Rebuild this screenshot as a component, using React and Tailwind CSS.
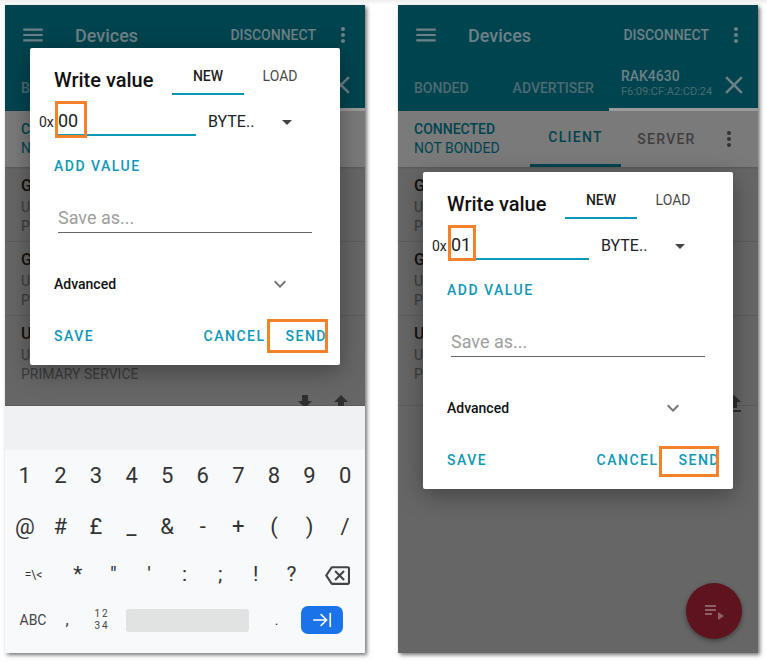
import {
  MdMenu,
  MdMoreVert,
  MdClose,
  MdArrowDropDown,
  MdExpandMore,
  MdFileDownload,
  MdFileUpload,
  MdPlaylistPlay,
  MdOutlineBackspace,
} from "react-icons/md";
import { ArrowRightToLine } from "lucide-react";

const services = [
  { name: "Generic Access", uuid: "UUID: 0x1800", h: "h-[75px]", pt: "pt-[8px]" },
  { name: "Generic Attribute", uuid: "UUID: 0x1801", h: "h-[74px]", pt: "pt-[7px]" },
  { name: "Unknown Service", uuid: "UUID: 6E400001", h: "h-[90px]", pt: "pt-[7px]" },
];

function DeviceScreen() {
  return (
    <div className="h-full flex flex-col bg-[#666666]">
      <div className="h-[106px] bg-[#00444f] flex flex-col shrink-0">
        <div className="h-[60px] flex items-center pl-[16px] text-[#6d8186]">
          <MdMenu className="w-[26px] h-[26px] -ml-[1px]" />
          <span className="ml-[29px] text-[18px] font-medium">Devices</span>
          <span className="ml-auto text-[14px] font-medium">DISCONNECT</span>
          <MdMoreVert className="w-[24px] h-[24px] ml-[15px] mr-[10px]" />
        </div>
        <div className="flex-1 flex items-center pl-[16px] text-[14px] font-medium text-[#4d6b72]">
          <span>BONDED</span>
          <span className="ml-[44px]">ADVERTISER</span>
          <div className="relative ml-[15px] w-[151px] h-full border-b-[3px] border-[#9a9a9a] pl-[12px] pt-[2px]">
            <div className="text-[14px] leading-[18px] text-[#6d8186]">RAK4630</div>
            <div className="text-[11px] leading-[13px] font-normal text-[#4d6b72]">F6:09:CF:A2:CD:24</div>
            <MdClose className="absolute right-[9px] top-[5px] w-[30px] h-[30px] text-[#6d8186]" />
          </div>
        </div>
      </div>
      <div className="h-[56px] bg-[#7a7a7a] flex items-stretch pl-[16px] shrink-0 shadow-[0_1px_2px_rgba(0,0,0,0.15)]">
        <div className="w-[116px] pt-[9px] text-[14px] leading-[19px] text-[#00444f]">
          <div className="font-medium">CONNECTED</div>
          <div>NOT BONDED</div>
        </div>
        <div className="w-[91px] h-full flex items-center justify-center border-b-[3px] border-[#00444f] text-[14px] font-medium tracking-[1.25px] text-[#00444f]">
          CLIENT
        </div>
        <div className="w-[91px] flex items-center justify-center text-[14px] font-medium tracking-[1.25px] text-[#3f3f3f]">
          SERVER
        </div>
        <div className="flex items-center ml-[-3px]">
          <MdMoreVert className="w-[24px] h-[24px] ml-[8px] text-[#333333]" />
        </div>
      </div>
      {services.map((s) => (
        <div key={s.name} className={`${s.h} ${s.pt} px-[16px] border-b border-[#5c5c5c] shrink-0`}>
          <div className="text-[16px] leading-[21px] font-medium text-[#111111]">{s.name}</div>
          <div className="text-[14px] leading-[20px] text-[#3c3c3c] mt-[1px]">{s.uuid}</div>
          <div className="text-[14px] leading-[19px] text-[#3c3c3c]">PRIMARY SERVICE</div>
        </div>
      ))}
      <div className="relative h-[48px] pl-[32px] shrink-0">
        <div className="absolute left-[32px] -top-[1px] text-[16px] leading-[21px] font-medium text-[#111111] translate-y-[7px]">
          Unknown Characteristic
        </div>
        <MdFileDownload className="absolute left-[288px] -top-[14px] w-[24px] h-[24px] text-[#2f2f2f]" />
        <MdFileUpload className="absolute left-[324px] -top-[14px] w-[24px] h-[24px] text-[#2f2f2f]" />
      </div>
    </div>
  );
}

function WriteDialog({ value, valueBox, sendBox, className }) {
  return (
    <div className={`absolute w-[310px] h-[317px] rounded-[2px] bg-white shadow-[0_6px_24px_rgba(0,0,0,0.35)] ${className}`}>
      <div className="flex h-[47px] pl-[24px]">
        <div className="w-[118px] pt-[19px] text-[20px] leading-[26px] font-medium text-[#111111]">Write value</div>
        <div className="w-[72px] h-[47px] pt-[20px] text-center text-[14px] leading-[16px] font-medium text-[#1f1f1f] border-b-[2px] border-[#0e98b8]">NEW</div>
        <div className="w-[72px] pt-[20px] text-center text-[14px] leading-[16px] text-[#4a4a4a]">LOAD</div>
      </div>
      <div className="flex mt-[13px] h-[28px] items-center pl-[9px]">
        <span className="w-[19px] text-[14px] text-[#222222]">0x</span>
        <div className="w-[138px] h-[28px] text-[18px] leading-[25px] text-[#222222] border-b-[2px] border-[#0e98b8]">{value}</div>
        <span className="ml-[12px] w-[70px] text-[16px] text-[#222222]">BYTE..</span>
        <MdArrowDropDown className="w-[24px] h-[24px] -ml-[3px] text-[#444444]" />
      </div>
      <div className="mt-[22px] pl-[24px] text-[14px] leading-[16px] font-medium tracking-[1.5px] text-[#0e98b8]">ADD VALUE</div>
      <div className="ml-[28px] mt-[32px] w-[254px] h-[27px] text-[18px] leading-[24px] text-[#9e9e9e] border-b border-[#666666]">Save as...</div>
      <div className="flex items-center mt-[41px] pl-[24px] h-[20px]">
        <span className="text-[14px] font-medium text-[#111111]">Advanced</span>
        <MdExpandMore className="w-[24px] h-[24px] ml-[152px] text-[#777777]" />
      </div>
      <div className="flex mt-[34px] pl-[24px] text-[14px] leading-[16px] font-medium tracking-[1.5px] text-[#0e98b8]">
        <span>SAVE</span>
        <span className="ml-auto">CANCEL</span>
        <span className="ml-[20px] mr-[13px]">SEND</span>
      </div>
      <div className={`absolute border-[3px] border-[#f5812a] ${valueBox}`} />
      <div className={`absolute border-[3px] border-[#f5812a] ${sendBox}`} />
    </div>
  );
}

const row1 = ["1", "2", "3", "4", "5", "6", "7", "8", "9", "0"];
const row2 = ["@", "#", "£", "_", "&", "-", "+", "(", ")", "/"];
const row3 = ["*", '"', "'", ":", ";", "!", "?"];

function Keyboard() {
  return (
    <div className="absolute left-0 right-0 bottom-0 h-[247px] bg-[#f8f9fb]">
      <div className="h-[44px] bg-[#f0f1f3]" />
      <div className="flex flex-col px-[2px] text-[#333333]">
        <div className="flex h-[51px] items-center">
          {row1.map((k) => (
            <span key={k} className="flex-1 text-center text-[22px]">{k}</span>
          ))}
        </div>
        <div className="flex h-[50px] items-center">
          {row2.map((k) => (
            <span key={k} className="flex-1 text-center text-[22px]">{k}</span>
          ))}
        </div>
        <div className="flex h-[48px] items-center">
          <span className="w-[53px] text-center text-[12px]">=\&lt;</span>
          {row3.map((k) => (
            <span key={k} className="w-[35.6px] text-center text-[21px]">{k}</span>
          ))}
          <MdOutlineBackspace className="w-[25px] h-[25px] ml-[16px] text-[#444444]" />
        </div>
        <div className="flex h-[42px] items-center">
          <span className="w-[52px] text-center text-[14px] text-[#444444]">ABC</span>
          <span className="w-[16px] text-center text-[16px]">,</span>
          <span className="w-[54px] text-center text-[10px] leading-[12px] tracking-[2px] text-[#444444]">
            12<br />34
          </span>
          <div className="w-[123px] h-[23px] ml-[-3px] rounded-[3px] bg-[#e1e2e2]" />
          <span className="w-[55px] text-center text-[14px]">.</span>
          <div className="w-[42px] h-[28px] ml-[-3px] rounded-[7px] bg-[#1a73e8] flex items-center justify-center">
            <ArrowRightToLine className="w-[24px] h-[22px] text-white" strokeWidth={1.75} />
          </div>
        </div>
      </div>
    </div>
  );
}

function Phone({ children }) {
  return (
    <div className="relative w-[360px] h-[648px] overflow-hidden shadow-[2px_2px_4px_rgba(0,0,0,0.55)]">
      <DeviceScreen />
      {children}
    </div>
  );
}

export default function App() {
  return (
    <div className="w-[767px] h-[662px] bg-white overflow-hidden" style={{ fontFamily: "Roboto, sans-serif" }}>
      <div className="h-[5px] bg-gradient-to-b from-[#eeeeee] to-white" />
      <div className="flex gap-[33px] pl-[5px]">
        <Phone>
          <Keyboard />
          <WriteDialog
            value="00"
            className="left-[25px] top-[43px]"
            valueBox="left-[25px] top-[53px] w-[32px] h-[37px]"
            sendBox="left-[237px] top-[271px] w-[61px] h-[34px]"
          />
        </Phone>
        <Phone>
          <WriteDialog
            value="01"
            className="left-[25px] top-[167px]"
            valueBox="left-[25px] top-[53px] w-[28px] h-[36px]"
            sendBox="left-[236px] top-[274px] w-[60px] h-[31px]"
          />
          <div className="absolute left-[288px] top-[578px] w-[56px] h-[56px] rounded-full bg-[#5f131f] shadow-[0_2px_5px_rgba(0,0,0,0.4)] flex items-center justify-center">
            <MdPlaylistPlay className="w-[24px] h-[24px] text-[#8d6068]" />
          </div>
        </Phone>
      </div>
    </div>
  );
}
